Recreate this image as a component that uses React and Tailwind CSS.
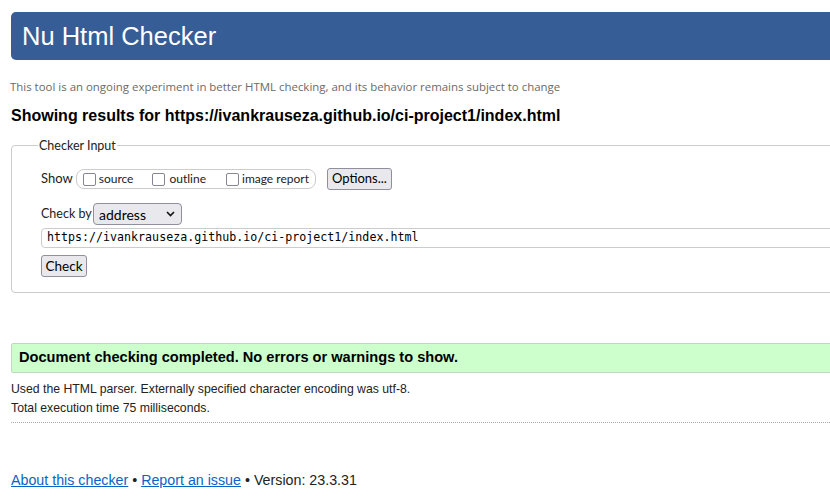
import React from "react";

const Box = () => (
  <span className="inline-block w-[13px] h-[13px] border-[1.5px] border-[#858594] rounded-[2px] bg-white shrink-0" />
);

const App = () => {
  return (
    <div className="w-[830px] h-[504px] overflow-hidden bg-white text-[#222] font-['Liberation_Sans',Arial,sans-serif]">
      <div className="w-[900px] pl-[11px]">

        {/* Header */}
        <div className="mt-[12px] h-[48px] bg-[#365d95] rounded-[5px] flex items-center pl-[11px] pt-[2px] text-white text-[25.5px] leading-none">
          Nu Html Checker
        </div>

        {/* Subtitle */}
        <p className="mt-[20px] h-[14px] leading-[14px] text-[11.45px] text-[#6a6a6a] font-['Open_Sans',sans-serif] -ml-[1px]">
          This tool is an ongoing experiment in better HTML checking, and its behavior remains subject to change
        </p>

        {/* Result heading */}
        <h2 className="mt-[12px] h-[20px] leading-[20px] text-[16px] font-bold text-black">
          Showing results for https://ivankrauseza.github.io/ci-project1/index.html
        </h2>

        {/* Checker input */}
        <fieldset className="mt-[11px] border border-[#ccc] rounded-[4px] px-[29px] pt-[15px] pb-[15px] font-['Lato',sans-serif] text-[12px] text-[#222]">
          <legend className="-ml-[3px] px-[1px] h-[16px] leading-[16px] text-[12.5px]">
            <span className="relative top-[1px]">Checker Input</span>
          </legend>

          <div className="flex items-center h-[22px]">
            <span className="mr-[3px] text-[13px]">Show</span>
            <div className="flex items-center h-[20px] border border-[#ccc] rounded-[8px] pl-[6px] pr-[6px]">
              <Box />
              <span className="ml-[3px] mr-[19px]">source</span>
              <Box />
              <span className="ml-[4px] mr-[20px]">outline</span>
              <Box />
              <span className="ml-[3px]">image report</span>
            </div>
            <button className="ml-[11px] h-[22px] w-[65px] bg-[#e9e9ed] border border-[#8f8f9d] rounded-[3px] text-[13px] text-black">
              Options...
            </button>
          </div>

          <div className="flex items-center h-[22px] mt-[13px]">
            <span className="w-[52px] text-[12.5px]">Check by</span>
            <div className="flex items-center justify-between w-[89px] h-[22px] bg-[#e9e9ed] border border-[#8f8f9d] rounded-[4px] pl-[5px] pr-[6px] text-[14px] text-black">
              <span>address</span>
              <svg width="9" height="6" viewBox="0 0 9 6" fill="none">
                <path d="M1 1l3.5 3.5L8 1" stroke="#111" strokeWidth="1.6" />
              </svg>
            </div>
          </div>

          <div className="mt-[3px] h-[20px] border border-[#ccc] rounded-[4px] flex items-center pl-[5px] font-['DejaVu_Sans_Mono',monospace] text-[11.65px] text-black">
            https://ivankrauseza.github.io/ci-project1/index.html
          </div>

          <button className="mt-[7px] block h-[22px] w-[46px] bg-[#e9e9ed] border border-[#8f8f9d] rounded-[3px] text-[13.5px] text-black">
            Check
          </button>
        </fieldset>

        {/* Success message */}
        <div className="mt-[50px] h-[30px] bg-[#ccffcc] border border-[#c2d6c2] rounded-[2px] flex items-center pl-[7px] text-[14.6px] font-bold text-black">
          Document checking completed. No errors or warnings to show.
        </div>

        <p className="mt-[8px] h-[16px] leading-[16px] text-[12.25px]">
          Used the HTML parser. Externally specified character encoding was utf-8.
        </p>
        <p className="mt-[3px] h-[16px] leading-[16px] text-[12.25px]">
          Total execution time 75 milliseconds.
        </p>

        <div className="mt-[6px] border-t border-dotted border-[#aaa]" />

        {/* Footer */}
        <p className="mt-[48px] h-[18px] leading-[18px] text-[14.25px]">
          <a href="#" className="text-[#0b63c7] underline">About this checker</a>
          {" • "}
          <a href="#" className="text-[#0b63c7] underline">Report an issue</a>
          {" • Version: 23.3.31"}
        </p>

      </div>
    </div>
  );
};

export default App;
